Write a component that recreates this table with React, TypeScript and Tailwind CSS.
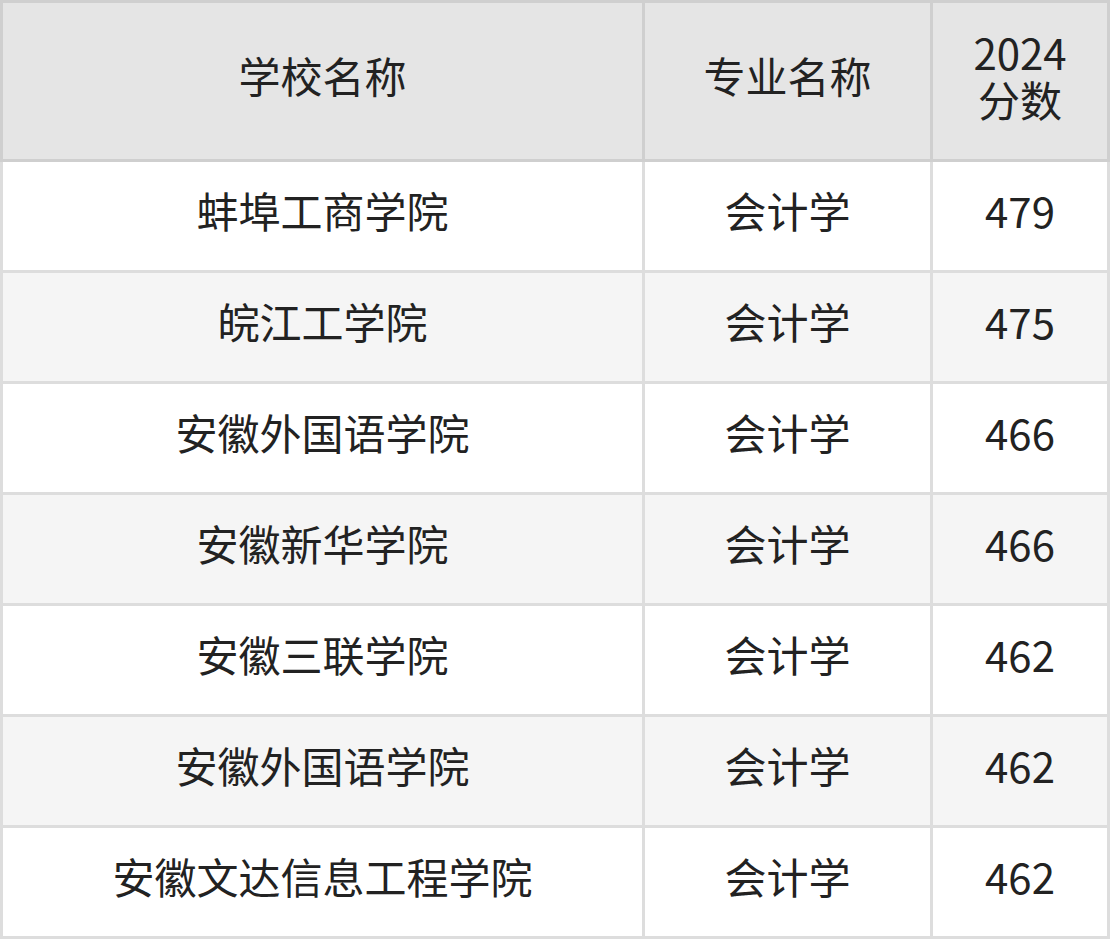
const ROWS = [
  { school: "蚌埠工商学院", major: "会计学", score: 479 },
  { school: "皖江工学院", major: "会计学", score: 475 },
  { school: "安徽外国语学院", major: "会计学", score: 466 },
  { school: "安徽新华学院", major: "会计学", score: 466 },
  { school: "安徽三联学院", major: "会计学", score: 462 },
  { school: "安徽外国语学院", major: "会计学", score: 462 },
  { school: "安徽文达信息工程学院", major: "会计学", score: 462 },
];

const head = "flex items-center justify-center border-[#cfcfcf] border-r-[3px] border-b-[3px] border-t-[3px] bg-[#e5e5e5] pb-[12px]";
const cell = "flex items-center justify-center border-[#dddddd] border-r-[3px] border-b-[3px] pb-[12px]";

export default function App() {
  return (
    <div
      className="w-[1110px] bg-white text-[42px] leading-[48px] text-[#222222]"
      style={{ fontFamily: '"Noto Sans CJK SC", "Noto Sans", sans-serif' }}
    >
      <div className="flex h-[162px]">
        <div className={`${head} w-[645px] border-l-[3px]`}>学校名称</div>
        <div className={`${head} w-[288px]`}>专业名称</div>
        <div className={`${head} w-[177px]`}>
          <p className="text-center leading-[47px]">
            2024
            <br />
            分数
          </p>
        </div>
      </div>
      {ROWS.map((r, i) => (
        <div key={i} className={`flex h-[111px] ${i % 2 === 1 ? "bg-[#f5f5f5]" : "bg-white"}`}>
          <div className={`${cell} w-[645px] border-l-[3px]`}>{r.school}</div>
          <div className={`${cell} w-[288px]`}>{r.major}</div>
          <div className={`${cell} w-[177px]`}>{r.score}</div>
        </div>
      ))}
    </div>
  );
}
